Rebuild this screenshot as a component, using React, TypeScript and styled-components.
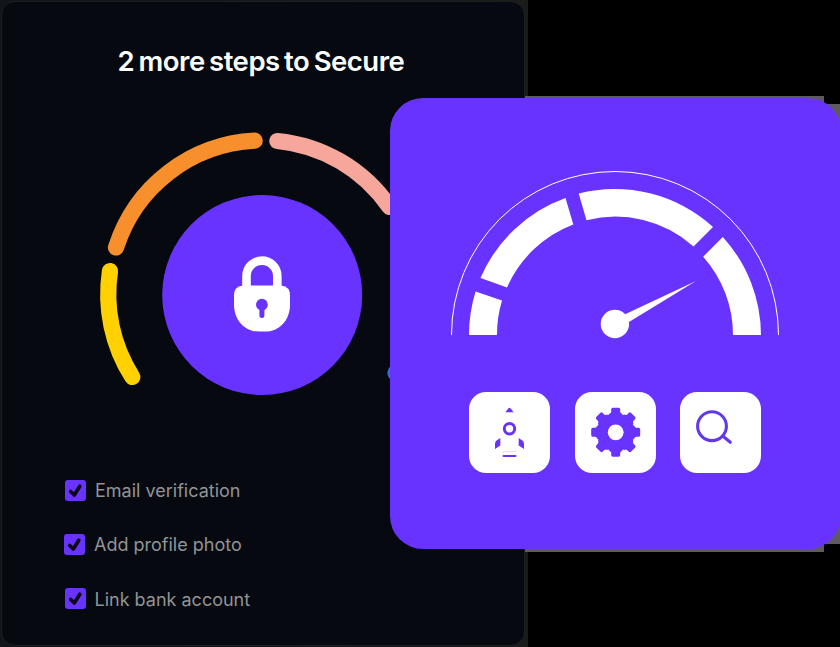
import React from "react";
import styled, { createGlobalStyle } from "styled-components";

const GlobalStyle = createGlobalStyle`
  body { margin: 0; background: #000; }
  * { box-sizing: border-box; }
`;

const VIOLET = "#6933ff";

const Stage = styled.main`
  position: relative;
  width: 840px;
  height: 647px;
  overflow: hidden;
  background: #000;
  font-family: Inter, "Liberation Sans", sans-serif;
`;

const CardFrame = styled.div`
  width: 528px;
  height: 647px;
  padding: 1px 3px 1px 1px;
  background: linear-gradient(90deg, #111418, #1a1c1c);
`;

const SecurityCard = styled.section`
  display: flex;
  flex-direction: column;
  width: 524px;
  height: 645px;
  border: 1px solid #1d2020;
  border-radius: 14px;
  background: #060a10;
`;

const Title = styled.h1`
  margin: 41px 0 0 115.5px;
  width: 300px;
  height: 36px;
  line-height: 36px;
  font-size: 27.5px;
  font-weight: 600;
  letter-spacing: -0.5px;
  word-spacing: -2px;
  white-space: nowrap;
  color: #fcfdfd;
`;

const Progress = styled.svg`
  display: block;
  flex: none;
  width: 340px;
  height: 320px;
  margin: 41px 0 0 88px;
`;

const Steps = styled.ul`
  display: flex;
  flex-direction: column;
  gap: 32.3px;
  margin: 39px 0 0 62px;
  padding: 0;
  list-style: none;
`;

const Step = styled.li<{ $indent: number }>`
  display: flex;
  align-items: center;
  gap: 9px;
  height: 22px;
  padding-left: ${(p) => p.$indent}px;
`;

const CheckBox = styled.span`
  display: flex;
  flex: none;
  width: 21px;
  height: 21px;
  border-radius: 3px;
  background: ${VIOLET};
`;

const StepLabel = styled.span`
  padding-top: 2px;
  font-size: 18px;
  line-height: 22px;
  font-weight: 400;
  white-space: nowrap;
  color: #929395;
`;

const Backing = styled.div<{ $left: number; $top: number; $width: number; $height: number }>`
  position: absolute;
  left: ${(p) => p.$left}px;
  top: ${(p) => p.$top}px;
  width: ${(p) => p.$width}px;
  height: ${(p) => p.$height}px;
  background: #5d5b60;
`;

const GaugeCard = styled.section`
  position: absolute;
  left: 390px;
  top: 98px;
  display: flex;
  flex-direction: column;
  align-items: flex-start;
  width: 451px;
  height: 451px;
  padding: 67px 0 0 55px;
  border-radius: 33px;
  background: ${VIOLET};
`;

const Gauge = styled.svg`
  display: block;
  flex: none;
  width: 340px;
  height: 180px;
`;

const Tiles = styled.div`
  display: flex;
  gap: 24.5px;
  margin: 47px 0 0 24px;
  width: 292px;
`;

const Tile = styled.div`
  display: flex;
  flex: none;
  width: 81px;
  height: 81px;
  border-radius: 17px;
  background: #fff;
`;

const TileIcon = styled.svg`
  width: 81px;
  height: 81px;
`;

const steps = [
  { label: "Email verification", indent: 1 },
  { label: "Add profile photo", indent: 0 },
  { label: "Link bank account", indent: 0.5 },
];

const arcs = [
  { color: "#ffd100", d: "M132.3 377A154 154 0 0 1 110 271" },
  { color: "#f78f2d", d: "M116 247.5A154 154 0 0 1 254.7 140.7" },
  { color: "#f7a69c", d: "M277.3 141A154 154 0 0 1 389.5 207" },
  { color: "#2f6fe0", d: "M395.5 373L398 369" },
];

const Check = () => (
  <svg width="21" height="21" viewBox="0 0 21 21" fill="none" aria-hidden="true">
    <path d="M5.7 11.5 9.3 15 14.8 6.2" stroke="#0c0714" strokeWidth="3.6" strokeLinecap="round" strokeLinejoin="round" />
  </svg>
);

const ProgressRing = () => (
  <Progress viewBox="90 120 340 320" aria-hidden="true">
    {arcs.map((a) => (
      <path key={a.color} d={a.d} fill="none" stroke={a.color} strokeWidth="16.2" strokeLinecap="round" />
    ))}
    <circle cx="262.2" cy="295" r="100" fill={VIOLET} />
    <path d="M246.500 290V276a15.400 15.400 0 0 1 30.800 0v14" fill="none" stroke="#fff" strokeWidth="8.600" />
    <path d="M243 285.400h38q9 1 9 10v9c0 16-11 27.200-25 27.200h-6c-14 0-25-11.200-25-27.200v-9q0-9 9-10z" fill="#fff" />
    <circle cx="261.900" cy="304.700" r="5.900" fill={VIOLET} />
    <path d="M261.900 305v10.600" stroke={VIOLET} strokeWidth="5" strokeLinecap="round" />
  </Progress>
);

const Speedometer = () => (
  <Gauge viewBox="445 165 340 180" aria-hidden="true">
    <path d="M451.500 335a163.500 163.500 0 0 1 327 0" fill="none" stroke="#fff" strokeWidth="1" />
    <g fill="#fff">
      <path d="M469 335A146 146 0 0 1 475.600 291.500L502 300.500A118 118 0 0 0 497 335z" />
      <path d="M480.500 278A146 146 0 0 1 565.500 198L573.300 224.500A118 118 0 0 0 507 287.500z" />
      <path d="M578.700 193.500A146 146 0 0 1 713 227L693.500 246.400A118 118 0 0 0 586.500 220.200z" />
      <path d="M722.800 237A146 146 0 0 1 761 335H733A118 118 0 0 0 703.200 256.700z" />
      <circle cx="614.900" cy="324" r="14.200" />
      <path d="M624 314.700 696 281 629 322z" />
    </g>
  </Gauge>
);

const Rocket = () => (
  <TileIcon viewBox="0 0 81 81" fill={VIOLET} aria-hidden="true">
    <path d="M36.300 20.200 39.300 16.400Q40.500 15.200 41.700 16.400L44.700 20.200z" />
    <circle cx="40.500" cy="36.700" r="5.200" fill="none" stroke={VIOLET} strokeWidth="3" />
    <path d="M31.300 46v7.500l-5.300 3.500v-5q0-2.300 1.300-3.300zM49.700 46v7.500l5.300 3.500v-5q0-2.300-1.300-3.300z" />
    <path d="M33.500 59.500h14" stroke="#d9cdf8" strokeWidth=".7" />
    <path d="M34.500 63.900h12" stroke={VIOLET} strokeWidth="2" strokeLinecap="round" />
  </TileIcon>
);

const Gear = () => (
  <TileIcon viewBox="0 0 81 81" aria-hidden="true">
    <g transform="translate(40.700 40.300)" fill={VIOLET}>
      <circle r="19" />
      {[0, 45, 90, 135].map((angle) => (
        <path key={angle} transform={`rotate(${angle})`} d="M-6.500-18.500q2-.6 2-2.300v-2q0-1.700 1.500-1.700h6q1.500 0 1.500 1.700v2q0 1.700 2 2.300v37q-2 .6-2 2.300v2q0 1.700-1.500 1.700h-6q-1.500 0-1.500-1.700v-2q0-1.700-2-2.300z" />
      ))}
      <circle r="7.900" fill="#fff" />
    </g>
  </TileIcon>
);

const Search = () => (
  <TileIcon viewBox="0 0 81 81" fill="none" stroke="#6238e8" strokeWidth="3.100" strokeLinecap="round" aria-hidden="true">
    <circle cx="32" cy="34.200" r="14.400" />
    <path d="M43 44.200 50.300 50.300" />
  </TileIcon>
);

export default function App() {
  return (
    <Stage>
      <GlobalStyle />
      <CardFrame>
        <SecurityCard>
          <Title>2 more steps to Secure</Title>
          <ProgressRing />
          <Steps>
            {steps.map((s) => (
              <Step key={s.label} $indent={s.indent}>
                <CheckBox><Check /></CheckBox>
                <StepLabel>{s.label}</StepLabel>
              </Step>
            ))}
          </Steps>
        </SecurityCard>
      </CardFrame>
      <Backing $left={525} $top={96} $width={299} $height={456} />
      <Backing $left={824} $top={104} $width={16} $height={440} />
      <GaugeCard>
        <Speedometer />
        <Tiles>
          <Tile><Rocket /></Tile>
          <Tile><Gear /></Tile>
          <Tile><Search /></Tile>
        </Tiles>
      </GaugeCard>
    </Stage>
  );
}
